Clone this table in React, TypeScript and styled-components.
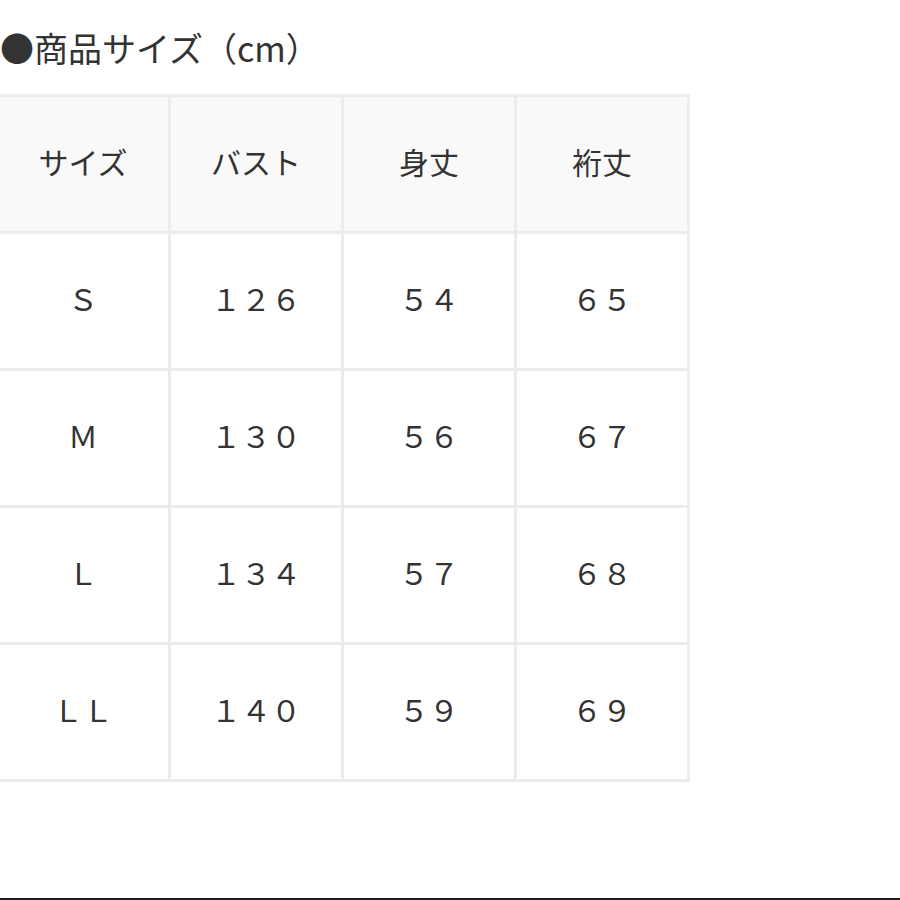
import styled, { createGlobalStyle } from "styled-components";

const GlobalStyle = createGlobalStyle`
  html, body {
    margin: 0;
    padding: 0;
    background: #ffffff;
  }
  body {
    font-family: "Noto Sans CJK JP", "Noto Sans", sans-serif;
    color: #333333;
  }
`;

const Page = styled.div`
  width: 900px;
  height: 900px;
  overflow: hidden;
  display: flex;
  flex-direction: column;
  background: #ffffff;
`;

const Title = styled.h1`
  margin: 28px 0 26px 0;
  height: 40px;
  line-height: 40px;
  font-size: 34px;
  font-weight: 400;
  color: #333333;
  white-space: nowrap;
`;

const Grid = styled.div`
  display: grid;
  grid-template-columns: repeat(4, 170px);
  grid-auto-rows: 134px;
  gap: 3px;
  padding: 3px;
  margin-left: -5px;
  width: max-content;
  background: #ececec;
`;

const Cell = styled.div<{ $head?: boolean }>`
  display: flex;
  align-items: center;
  justify-content: center;
  padding-bottom: 6px;
  box-sizing: border-box;
  background: ${(p) => (p.$head ? "#f9f9f9" : "#ffffff")};
  font-size: 30px;
  color: #333333;
  white-space: nowrap;
`;

const Spacer = styled.div`
  flex: 1;
`;

const BottomRule = styled.div`
  height: 2px;
  background: #1c1c1c;
`;

const head = ["サイズ", "バスト", "身丈", "裄丈"];

const rows = [
  ["Ｓ", "１２６", "５４", "６５"],
  ["Ｍ", "１３０", "５６", "６７"],
  ["Ｌ", "１３４", "５７", "６８"],
  ["ＬＬ", "１４０", "５９", "６９"],
];

export default function App() {
  return (
    <Page>
      <GlobalStyle />
      <Title>●商品サイズ（cm）</Title>
      <Grid>
        {head.map((h) => (
          <Cell key={h} $head>
            {h}
          </Cell>
        ))}
        {rows.map((r) =>
          r.map((v, i) => <Cell key={r[0] + i}>{v}</Cell>)
        )}
      </Grid>
      <Spacer />
      <BottomRule />
    </Page>
  );
}
